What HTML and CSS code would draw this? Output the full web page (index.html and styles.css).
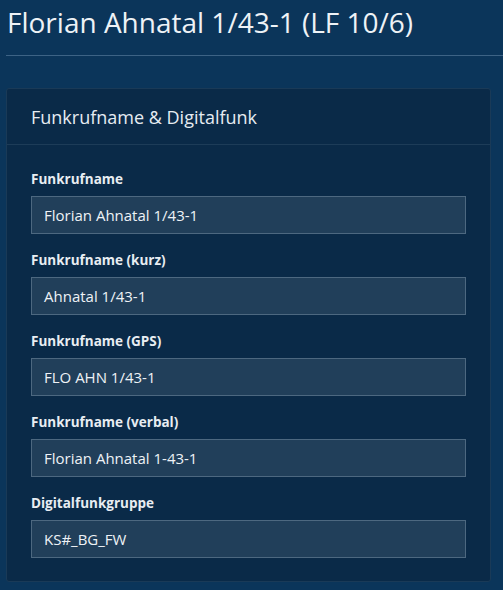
FILE: index.html
```html
<!DOCTYPE html>
<html lang="de">
<head>
<meta charset="utf-8">
<title>Florian Ahnatal 1/43-1 (LF 10/6)</title>
<link rel="stylesheet" href="styles.css">
</head>
<body>
<div class="page">
  <h1 class="title">Florian Ahnatal 1/43-1 (LF 10/6)</h1>
  <hr class="rule">
  <section class="card">
    <header class="card-header">Funkrufname &amp; Digitalfunk</header>
    <div class="card-body">
      <div class="group">
        <label class="label">Funkrufname</label>
        <div class="input">Florian Ahnatal 1/43-1</div>
      </div>
      <div class="group">
        <label class="label">Funkrufname (kurz)</label>
        <div class="input">Ahnatal 1/43-1</div>
      </div>
      <div class="group">
        <label class="label">Funkrufname (GPS)</label>
        <div class="input">FLO AHN 1/43-1</div>
      </div>
      <div class="group">
        <label class="label">Funkrufname (verbal)</label>
        <div class="input">Florian Ahnatal 1-43-1</div>
      </div>
      <div class="group">
        <label class="label">Digitalfunkgruppe</label>
        <div class="input">KS#_BG_FW</div>
      </div>
    </div>
  </section>
</div>
</body>
</html>
```

FILE: styles.css
```css
html, body {
  margin: 0;
  padding: 0;
  background: #0b355a;
  height: 100%;
  overflow: hidden;
}
body {
  font-family: "Open Sans", "Noto Sans", sans-serif;
  color: #e9eef3;
}
.page {
  padding: 0 0 0 6px;
}
.title {
  margin: 0;
  padding: 2px 0 0 1px;
  height: 55px;
  box-sizing: border-box;
  font-size: 28px;
  font-weight: 400;
  line-height: 40px;
  color: #eef2f6;
}
.rule {
  margin: 0 0 32px 0;
  border: 0;
  height: 1px;
  background: #3d6385;
}
.card {
  width: 485px;
  box-sizing: border-box;
  background: #0a2a48;
  border: 1px solid #1a3a57;
  border-radius: 3px;
}
.card-header {
  height: 56px;
  box-sizing: border-box;
  border-bottom: 1px solid #1d3c58;
  padding: 0 24px;
  display: flex;
  align-items: center;
  font-size: 18px;
  color: #e6ecf2;
}
.card-body {
  padding: 24px 24px 23px 24px;
}
.group {
  display: flex;
  flex-direction: column;
  gap: 6px;
  margin-bottom: 16px;
}
.group:last-child {
  margin-bottom: 0;
}
.label {
  font-size: 13.5px;
  font-weight: 700;
  line-height: 21px;
  color: #e8edf2;
}
.input {
  height: 38px;
  box-sizing: border-box;
  border: 1px solid #4d6880;
  background: #213f5a;
  padding: 0 12px;
  display: flex;
  align-items: center;
  font-size: 15px;
  color: #eef2f6;
}
```
